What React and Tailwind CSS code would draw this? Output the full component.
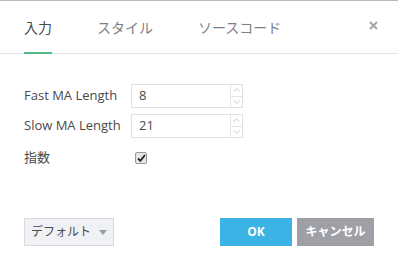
import React from "react"

const font = { fontFamily: '"Open Sans", "Noto Sans CJK JP", sans-serif' }

function Spinner() {
  return (
    <div className="flex w-[12px] flex-col border-l border-[#e3e4e8]">
      <div className="flex flex-1 items-center justify-center border-b border-[#e3e4e8]">
        <svg width="7" height="4" viewBox="0 0 7 4">
          <path d="M0.5 3.5 L3.5 0.8 L6.5 3.5" fill="none" stroke="#b8bcc4" strokeWidth="0.8" />
        </svg>
      </div>
      <div className="flex flex-1 items-center justify-center">
        <svg width="7" height="4" viewBox="0 0 7 4">
          <path d="M0.5 0.5 L3.5 3.2 L6.5 0.5" fill="none" stroke="#b8bcc4" strokeWidth="0.8" />
        </svg>
      </div>
    </div>
  )
}

function NumberRow({ label, value }) {
  return (
    <div className="flex h-[24px] items-center">
      <div className="w-[107px] text-[13px] text-[#4a4a4a]">{label}</div>
      <div className="flex h-[24px] w-[112px] border border-[#e0e1e5] bg-white">
        <div className="flex flex-1 items-center pl-[7px] text-[13px] text-[#4a4a4a]">{value}</div>
        <Spinner />
      </div>
    </div>
  )
}

export default function App() {
  return (
    <div className="h-[270px] w-[398px] overflow-hidden border-t border-[#b9b9b9] bg-white" style={font}>
      {/* Tabs */}
      <div className="flex h-[53px] items-stretch border-b border-[#e0e3eb] pl-[24px] pr-[20px]">
        <div className="relative flex items-center text-[14px] text-[#4a4a4a]">
          入力
          <div className="absolute bottom-[-1px] left-0 right-0 h-[2px] bg-[#53b987]" />
        </div>
        <div className="ml-[45px] flex items-center text-[14px] text-[#7c7f86]">スタイル</div>
        <div className="ml-[45px] flex items-center text-[14px] text-[#7c7f86]">ソースコード</div>
        <div className="ml-auto flex items-center pb-[3px]">
          <svg width="9" height="9" viewBox="0 0 9 9">
            <path d="M1 1 L8 8 M8 1 L1 8" stroke="#9ea2aa" strokeWidth="1.8" />
          </svg>
        </div>
      </div>

      {/* Inputs */}
      <div className="flex flex-col gap-[6px] pl-[24px] pt-[30px]">
        <NumberRow label="Fast MA Length" value="8" />
        <NumberRow label="Slow MA Length" value="21" />
        <div className="mt-[2px] flex h-[24px] items-center">
          <div className="w-[111px] text-[13px] text-[#4a4a4a]">指数</div>
          <div className="flex h-[12px] w-[12px] items-center justify-center rounded-[2px] border border-[#9a9a9a] bg-[#e6e6e6]">
            <svg width="9" height="8" viewBox="0 0 9 8">
              <path d="M1 4.5 L3.3 6.8 L8 1" fill="none" stroke="#222" strokeWidth="1.8" />
            </svg>
          </div>
        </div>
      </div>

      {/* Footer */}
      <div className="mt-[48px] flex items-center pl-[24px] pr-[24px]">
        <button className="flex h-[28px] w-[90px] items-center justify-center gap-[8px] border border-[#d8d9de] bg-[#f0f1f5] text-[12px] text-[#4a4a4a]">
          デフォルト
          <svg width="8" height="5" viewBox="0 0 8 5">
            <path d="M0 0 L8 0 L4 5 Z" fill="#9a9da4" />
          </svg>
        </button>
        <button className="ml-auto h-[28px] w-[72px] bg-[#3bb3e4] text-[12px] font-bold text-white">OK</button>
        <button className="ml-[5px] h-[28px] w-[77px] bg-[#9ea0a6] text-[12px] font-bold text-white">キャンセル</button>
      </div>
    </div>
  )
}
